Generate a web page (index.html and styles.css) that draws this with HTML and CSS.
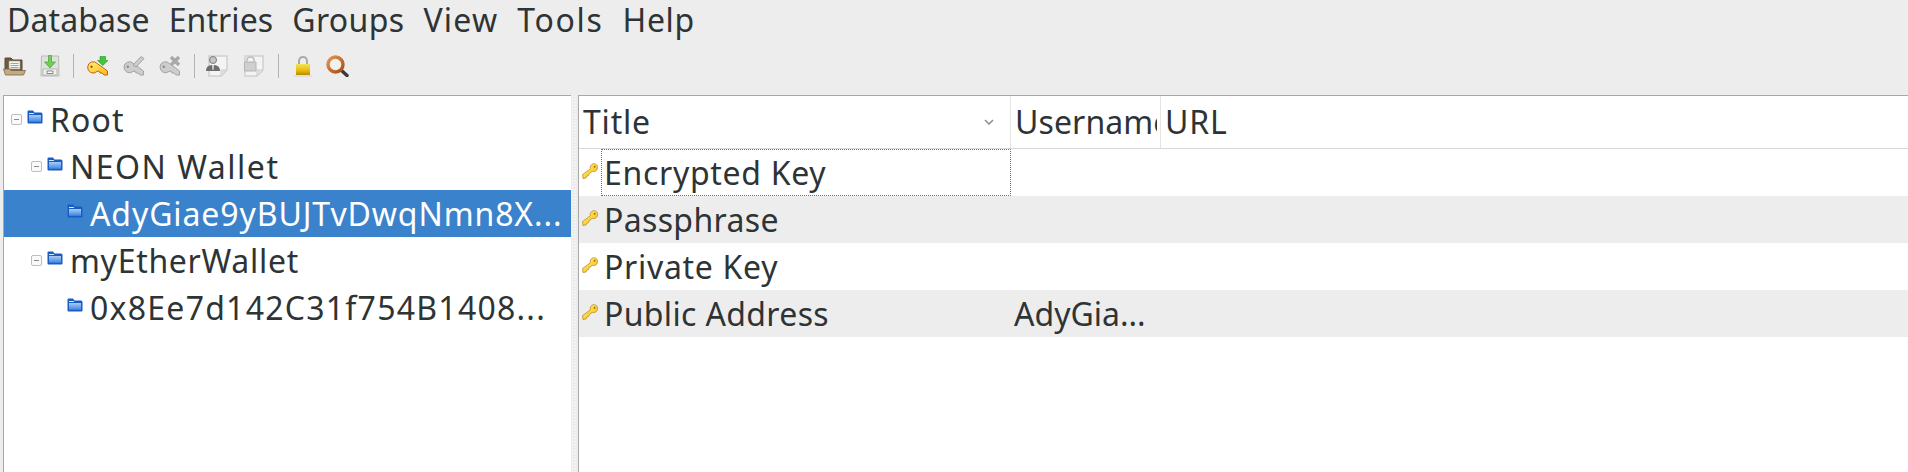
FILE: index.html
```html
<!DOCTYPE html>
<html>
<head>
    <title>Password database</title>
    <link rel="stylesheet" href="styles.css">
</head>
<body>
    <svg class="defs" width="0" height="0">
        <defs>
            <linearGradient id="blue" x1="0" y1="0" x2="0" y2="1">
                <stop offset="0" stop-color="#a9cdf5"/>
                <stop offset="1" stop-color="#3f86e0"/>
            </linearGradient>
            <linearGradient id="gold" x1="0" y1="0" x2="1" y2="1">
                <stop offset="0" stop-color="#fff27a"/>
                <stop offset="1" stop-color="#f7bb10"/>
            </linearGradient>
            <linearGradient id="lockbody" x1="0" y1="0" x2="0" y2="1">
                <stop offset="0" stop-color="#f5e25a"/>
                <stop offset=".6" stop-color="#e6bb0a"/>
                <stop offset="1" stop-color="#b78a05"/>
            </linearGradient>
            <linearGradient id="ring" x1="0" y1="0" x2="1" y2="1">
                <stop offset="0" stop-color="#e8944a"/>
                <stop offset="1" stop-color="#a84f12"/>
            </linearGradient>
            <symbol id="folder" viewBox="0 0 16 14">
                <path d="M.5 3V1.500Q.5.5 1.500.5H6L7.500 2.500H14Q15.500 2.500 15.500 4V12.500Q15.500 13.500 14.500 13.500H1.500Q.5 13.500 .5 12.500Z" fill="#1a5cc4"/>
                <path d="M2 5H14V11.800H2Z" fill="url(#blue)"/>
                <path d="M2 3H6.500L7.300 4H2Z" fill="#dcebfb"/>
            </symbol>
            <symbol id="key" viewBox="0 0 16 16">
                <path d="M15.400 3.200C14.700.3 10.700-.2 9 2.200C8.200 3.300 8 4.600 8.400 5.800L.6 11.500L1 15.500L4 15L4.700 13.200L6.500 12.600L7.100 10.700L10.300 8.400C12.300 9 14.400 8 15.200 6.200C15.600 5.300 15.600 4.200 15.400 3.200Z" fill="url(#gold)" stroke="#b9800e" stroke-width=".7"/>
                <circle cx="12.600" cy="3.700" r="1" fill="#9a6f10"/>
            </symbol>
            <symbol id="greykey" viewBox="0 0 22 22">
                <path d="M1 12a5.500 5.500 0 0 1 9.500-3.500L20.500 16V20H17L15 18H13L12 16L10 16.500A5.500 5.500 0 0 1 1 12Z" fill="#cdcdcd" stroke="#a4a4a4"/>
                <circle cx="4.800" cy="11.800" r="1.300" fill="#8f8f8f"/>
            </symbol>
            <symbol id="page" viewBox="0 0 22 22">
                <path d="M2 1H20V15L14 21H2Z" fill="#f4f4f4" stroke="#cfcfcf" stroke-width="1.500"/>
                <path d="M14 21V15H20Z" fill="#e0e0e0" stroke="#cfcfcf"/>
            </symbol>
        </defs>
    </svg>

    <div class="menubar">
        <span>Database</span>
        <span>Entries</span>
        <span class="m-groups">Groups</span>
        <span class="m-view">View</span>
        <span class="m-tools">Tools</span>
        <span class="m-help">Help</span>
    </div>

    <div class="toolbar">
        <svg class="tool tool-open" viewBox="0 0 23 19" width="23" height="19">
            <path d="M2 1H8L10 3H19V14H2Z" fill="#6d5a3c" stroke="#5b4a30"/>
            <path d="M6 4H17V12H6Z" fill="#f7f7f2" stroke="#9d9d96" stroke-width=".6"/>
            <path d="M7.500 6.500H15.500M7.500 8.500H15.500M7.500 10.500H15.500" stroke="#8d8d88" stroke-width=".8"/>
            <path d="M.5 12H7L8 13.500H22.500L20.500 18H2.500Z" fill="#c4aa83" stroke="#7c6748" stroke-width=".8"/>
        </svg>
        <svg class="tool tool-save" viewBox="0 0 20 22" width="20" height="22">
            <path d="M1.500 1H18.500L19 21H1Z" fill="#dfe2df" stroke="#b9bcb9"/>
            <path d="M3 14H17V20H3Z" fill="#f0f0ee" stroke="#a0a2a0" stroke-width=".7"/>
            <path d="M7 16H13V18.500H7Z" fill="#fff" stroke="#6d6d6d" stroke-width=".8"/>
            <path d="M8.500 .5H11.500V7H15.500L10 13L4.500 7H8.500Z" fill="#76cc58" stroke="#3fa630" stroke-width=".7"/>
        </svg>
        <i class="sep"></i>
        <svg class="tool tool-key" viewBox="0 0 22 21" width="22" height="21">
            <path d="M.7 11a5.500 5.500 0 0 1 9.500-3.500L20.500 15V19H17L15 17H13L12 15L10 15.500A5.500 5.500 0 0 1 .7 11Z" fill="url(#gold)" stroke="#c8500f" stroke-width=".9"/>
            <circle cx="4.500" cy="10.800" r="1.200" fill="#b5540e"/>
            <path d="M13 .5H18.500V4.500H21L15.800 9.500L10.500 4.500H13Z" fill="#42c83a" stroke="#1f9b2a" stroke-width=".6"/>
        </svg>
        <svg class="tool tool-key2" viewBox="0 0 22 22" width="22" height="22">
            <use href="#greykey"/>
            <path d="M10 10L18 1.500L21 3.500L13 12Z" fill="#cdcdcd" stroke="#a4a4a4"/>
        </svg>
        <svg class="tool tool-key3" viewBox="0 0 22 22" width="22" height="22">
            <use href="#greykey"/>
            <path d="M12 2L20 10M20 2L12 10" stroke="#a8a8a8" stroke-width="3.500"/>
        </svg>
        <i class="sep"></i>
        <svg class="tool tool-user" viewBox="0 0 23 22" width="23" height="22">
            <use href="#page" x="1" width="22" height="22"/>
            <circle cx="7" cy="5" r="3.500" fill="#c6c6c6" stroke="#7c7c7c"/>
            <path d="M0 16C0 11.500 3 10 7 10C11 10 14 11.500 14 16Z" fill="#6e6e6e"/>
            <path d="M6 10H8L7.500 15H6.500Z" fill="#ddd"/>
        </svg>
        <svg class="tool tool-lockpage" viewBox="0 0 22 22" width="22" height="22">
            <use href="#page"/>
            <path d="M4 6.500V5C4 1 11 1 11 5V6.500" fill="none" stroke="#bdbdbd" stroke-width="1.600"/>
            <path d="M1.500 7H13V16H1.500Z" fill="#cfcfcf" stroke="#b4b4b4"/>
        </svg>
        <i class="sep"></i>
        <svg class="tool tool-lock" viewBox="0 0 18 22" width="18" height="22">
            <path d="M5 10V6C5 .5 13 .5 13 6V10" fill="none" stroke="#a9a9a9" stroke-width="2"/>
            <path d="M2 9H16V20H2Z" fill="url(#lockbody)"/>
            <path d="M0 21H18" stroke="#d2d2d2"/>
        </svg>
        <svg class="tool tool-find" viewBox="0 0 23 22" width="23" height="22">
            <path d="M15 15L21 20.500" stroke="#3a3a3a" stroke-width="3.500" stroke-linecap="round"/>
            <circle cx="9.500" cy="9.500" r="7.500" fill="#f1f1ee" stroke="url(#ring)" stroke-width="3.400"/>
        </svg>
    </div>

    <div class="panes">
        <div class="tree">
            <div class="node">
                <span class="toggle"></span>
                <svg class="folder"><use href="#folder"/></svg>
                <span class="label">Root</span>
            </div>
            <div class="node depth1">
                <span class="toggle"></span>
                <svg class="folder"><use href="#folder"/></svg>
                <span class="label wide">NEON Wallet</span>
            </div>
            <div class="node depth2 selected">
                <svg class="folder"><use href="#folder"/></svg>
                <span class="label snug">AdyGiae9yBUJTvDwqNmn8X...</span>
            </div>
            <div class="node depth1">
                <span class="toggle"></span>
                <svg class="folder"><use href="#folder"/></svg>
                <span class="label tight">myEtherWallet</span>
            </div>
            <div class="node depth2">
                <svg class="folder"><use href="#folder"/></svg>
                <span class="label digits">0x8Ee7d142C31f754B1408...</span>
            </div>
        </div>

        <div class="splitter"></div>

        <div class="entries">
            <div class="head">
                <div class="col-title head-cell">
                    <span>Title</span>
                    <svg class="sort" viewBox="0 0 10 6" width="10" height="6"><path d="M1 1L5 5L9 1" fill="none" stroke="#8c8c8c" stroke-width="1.500"/></svg>
                </div>
                <div class="col-user head-cell clip">Username</div>
                <div class="col-url head-cell">URL</div>
            </div>
            <div class="row">
                <svg class="key"><use href="#key"/></svg>
                <div class="title-cell focused">Encrypted Key</div>
            </div>
            <div class="row alt">
                <svg class="key"><use href="#key"/></svg>
                <div class="title-cell tight">Passphrase</div>
            </div>
            <div class="row">
                <svg class="key"><use href="#key"/></svg>
                <div class="title-cell">Private Key</div>
            </div>
            <div class="row alt">
                <svg class="key"><use href="#key"/></svg>
                <div class="title-cell tight">Public Address</div>
                <div class="user-cell">AdyGia...</div>
            </div>
        </div>
    </div>
</body>
</html>
```

FILE: styles.css
```css
html, body {
    height: 100%;
}
body {
    margin: 0;
    background-color: #ededed;
    color: #2e3436;
    font-family: "Noto Sans", sans-serif;
    font-size: 32px;
    overflow: hidden;
    display: flex;
    flex-direction: column;
}
.defs {
    position: absolute;
}
.menubar {
    height: 45px;
    display: flex;
    gap: 19px;
    padding-left: 7px;
    line-height: 40px;
    letter-spacing: 0.1px;
}
.m-groups { letter-spacing: 0.35px; }
.m-view { letter-spacing: 1.2px; }
.m-tools { letter-spacing: 1.7px; }
.m-help { letter-spacing: 0.6px; }
.toolbar {
    height: 50px;
    display: flex;
    align-items: center;
    padding: 0 0 8px 3px;
    box-sizing: border-box;
}
.tool {
    flex: none;
}
.tool-save { margin-left: 14px; }
.tool-key { margin-left: 13px; }
.tool-key2 { margin-left: 14px; }
.tool-key3 { margin-left: 14px; }
.tool-user { margin-left: 11px; }
.tool-lockpage { margin-left: 14px; }
.tool-lock { margin-left: 15px; }
.tool-find { margin-left: 14px; }
.sep {
    width: 1px;
    height: 24px;
    background-color: #b3b3b3;
    margin-left: 13px;
}
.panes {
    flex: 1;
    display: flex;
    min-height: 0;
    padding-left: 3px;
}
.tree {
    width: 568px;
    box-sizing: border-box;
    background-color: #fff;
    border: 1px solid #a8a8a8;
    border-width: 1px 0 0 1px;
    letter-spacing: 1.1px;
}
.node {
    height: 47px;
    display: flex;
    align-items: center;
    white-space: nowrap;
    padding-left: 7px;
    line-height: 45px;
}
.depth1 { padding-left: 27px; }
.depth2 { padding-left: 63px; }
.wide { letter-spacing: 1.5px; }
.snug { letter-spacing: 0.9px; }
.digits { letter-spacing: 1.25px; }
.node .tight { letter-spacing: 0.7px; }
.node.selected {
    background-color: #3b82cc;
    color: #fff;
}
.toggle {
    width: 9px;
    height: 9px;
    border: 1px solid #bdbdbd;
    border-radius: 2px;
    margin-right: 5px;
    position: relative;
    background-color: #fafafa;
}
.toggle::after {
    content: "";
    position: absolute;
    left: 2px;
    right: 2px;
    top: 4px;
    height: 1px;
    background-color: #8a8a8a;
}
.folder {
    width: 16px;
    height: 14px;
    margin: -5px 7px 0 0;
    flex: none;
}
.splitter {
    width: 7px;
    background-color: #ededed;
    background-image: radial-gradient(#fbfbfb 1px, transparent 1px);
    background-size: 3px 3px;
}
.entries {
    flex: 1;
    background-color: #fff;
    border: 1px solid #a8a8a8;
    border-width: 1px 0 0 1px;
}
.head {
    height: 52px;
    display: flex;
    border-bottom: 1px solid #d8d8d8;
    line-height: 52px;
}
.head-cell {
    box-sizing: border-box;
    padding-left: 4px;
    border-right: 1px solid #e4e4e4;
}
.col-title {
    width: 432px;
    display: flex;
    justify-content: space-between;
    align-items: center;
    padding-right: 16px;
    letter-spacing: 0.8px;
}
.col-user {
    width: 149px;
    letter-spacing: 0.1px;
}
.clip {
    overflow: hidden;
    border-right: 3px solid #fff;
    box-shadow: 1px 0 0 #e4e4e4;
}
.col-url {
    border-right: none;
    padding-left: 5px;
    letter-spacing: 0.8px;
}
.row {
    height: 47px;
    display: flex;
    align-items: center;
    line-height: 45px;
}
.row.alt {
    background-color: #ededed;
}
.key {
    width: 16px;
    height: 16px;
    margin: -3px 0 0 3px;
    flex: none;
}
.title-cell {
    width: 410px;
    height: 47px;
    box-sizing: border-box;
    margin-left: 3px;
    padding-left: 2px;
    border: 1px solid transparent;
    letter-spacing: 0.7px;
}
.title-cell.tight {
    letter-spacing: 0.35px;
}
.title-cell.focused {
    border: 1px dotted #6f6f6f;
}
.user-cell {
    padding-left: 3px;
}
```
